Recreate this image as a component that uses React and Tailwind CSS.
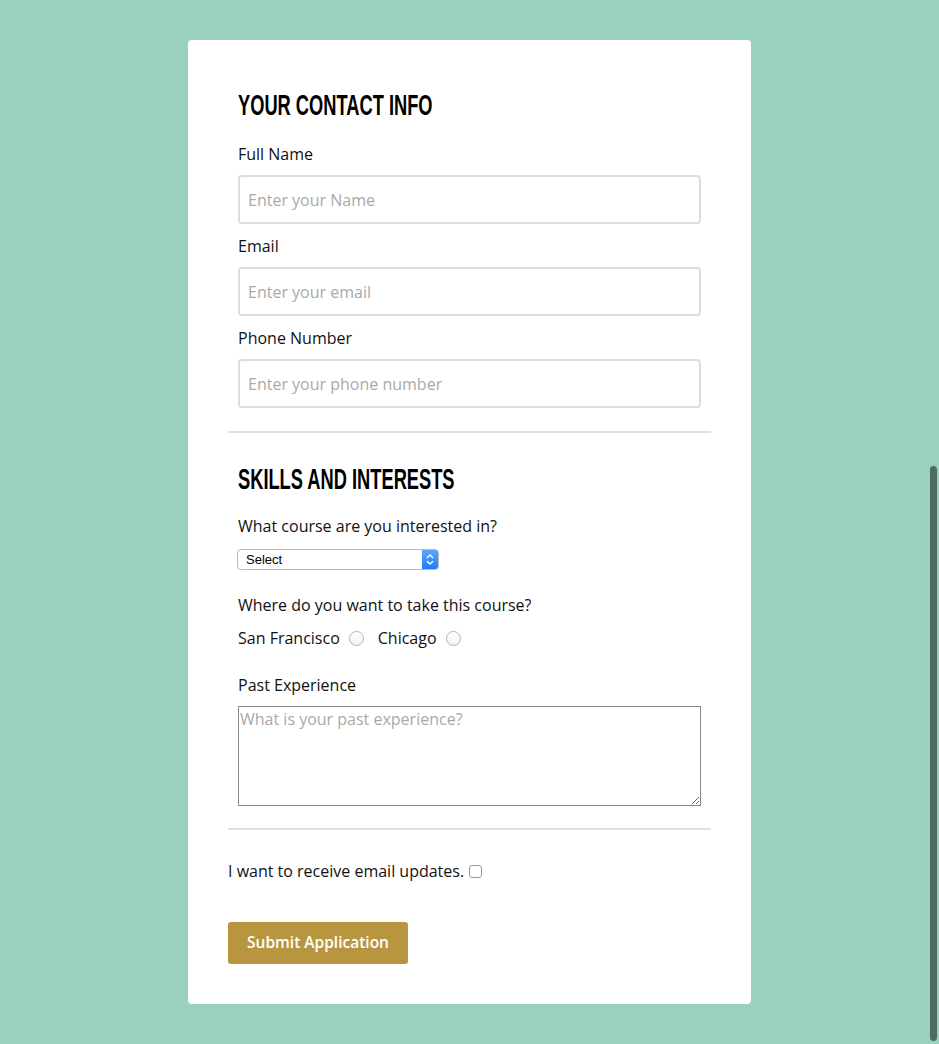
import React from "react";

function Label({ children, className = "" }) {
  return (
    <div className={`text-[16px] leading-[24px] text-[#111] ${className}`}>{children}</div>
  );
}

function TextInput({ placeholder, className = "" }) {
  return (
    <input
      type="text"
      placeholder={placeholder}
      className={`block w-full h-[49px] border-2 border-[#dddddd] rounded-[4px] bg-white pl-[8px] text-[16px] text-[#111] placeholder:text-[#a9a9a9] outline-none ${className}`}
      style={{ fontFamily: '"Open Sans", sans-serif' }}
    />
  );
}

function Heading({ children, className = "" }) {
  return (
    <h2
      className={`text-[29px] leading-[29px] font-bold text-black whitespace-nowrap origin-left scale-x-[0.63] ${className}`}
      style={{ fontFamily: '"Liberation Sans", Arial, sans-serif' }}
    >
      {children}
    </h2>
  );
}

function Radio() {
  return (
    <span className="inline-block w-[15px] h-[15px] rounded-full border border-[#b3b3b3] bg-gradient-to-b from-white to-[#f2f2f2] ml-[9px] mr-[14px]" />
  );
}

export default function App() {
  return (
    <div
      className="min-h-screen bg-[#9ad1bd] pt-[40px] pb-[40px]"
      style={{ fontFamily: '"Open Sans", sans-serif' }}
    >
      <div className="mx-auto w-[563px] bg-white rounded-[4px] px-[40px] pt-[51px] pb-[40px]">
        <div className="px-[10px]">
          <Heading>YOUR CONTACT INFO</Heading>
          <Label className="mt-[22px]">Full Name</Label>
          <TextInput placeholder="Enter your Name" className="mt-[9px]" />
          <Label className="mt-[10px]">Email</Label>
          <TextInput placeholder="Enter your email" className="mt-[9px]" />
          <Label className="mt-[10px]">Phone Number</Label>
          <TextInput placeholder="Enter your phone number" className="mt-[9px]" />
        </div>

        <div className="mt-[23px] h-[2px] bg-[#e0e0e0]" />

        <div className="px-[10px]">
          <Heading className="mt-[32px]">SKILLS AND INTERESTS</Heading>
          <Label className="mt-[20px]">What course are you interested in?</Label>
          <div
            className="mt-[11px] ml-[-1px] w-[202px] h-[21px] flex items-stretch border border-[#b9b9b9] rounded-[4px] bg-white overflow-hidden"
            style={{ fontFamily: '"Liberation Sans", Arial, sans-serif' }}
          >
            <span className="flex-1 pl-[8px] text-[13px] leading-[19px] text-black">Select</span>
            <span className="w-[16px] flex items-center justify-center bg-gradient-to-b from-[#5aa6ff] to-[#1f7cf5]">
              <svg width="8" height="13" viewBox="0 0 8 13" fill="none" stroke="white" strokeWidth="1.4" strokeLinecap="round" strokeLinejoin="round">
                <path d="M1.3 4.6 L4 2 L6.7 4.6" />
                <path d="M1.3 8.4 L4 11 L6.7 8.4" />
              </svg>
            </span>
          </div>
          <Label className="mt-[23px]">Where do you want to take this course?</Label>
          <div className="mt-[9px] flex items-center text-[16px] leading-[24px] text-[#111]">
            <span>San Francisco</span>
            <Radio />
            <span>Chicago</span>
            <Radio />
          </div>
          <Label className="mt-[23px]">Past Experience</Label>
          <textarea
            placeholder="What is your past experience?"
            className="mt-[9px] block w-full h-[100px] border border-[#8a8a8a] bg-white px-[1px] pt-[1px] text-[16px] leading-[22px] placeholder:text-[#a9a9a9] outline-none"
            style={{ fontFamily: '"Open Sans", sans-serif' }}
          />
        </div>

        <div className="mt-[22px] h-[2px] bg-[#e0e0e0]" />

        <div className="mt-[29px] flex items-center text-[16px] leading-[24px] text-[#111]">
          <span>I want to receive email updates.</span>
          <span className="ml-[5px] inline-block w-[13px] h-[13px] rounded-[3px] border border-[#999999] bg-white" />
        </div>

        <button
          className="mt-[39px] block w-[180px] h-[42px] rounded-[3px] bg-[#b8963f] text-white text-[15.5px] font-semibold"
          style={{ fontFamily: '"Open Sans", sans-serif' }}
        >
          Submit Application
        </button>
      </div>

      <div className="fixed right-[2px] top-[466px] w-[7px] h-[575px] rounded-full bg-[#4d6b62]" />
    </div>
  );
}
